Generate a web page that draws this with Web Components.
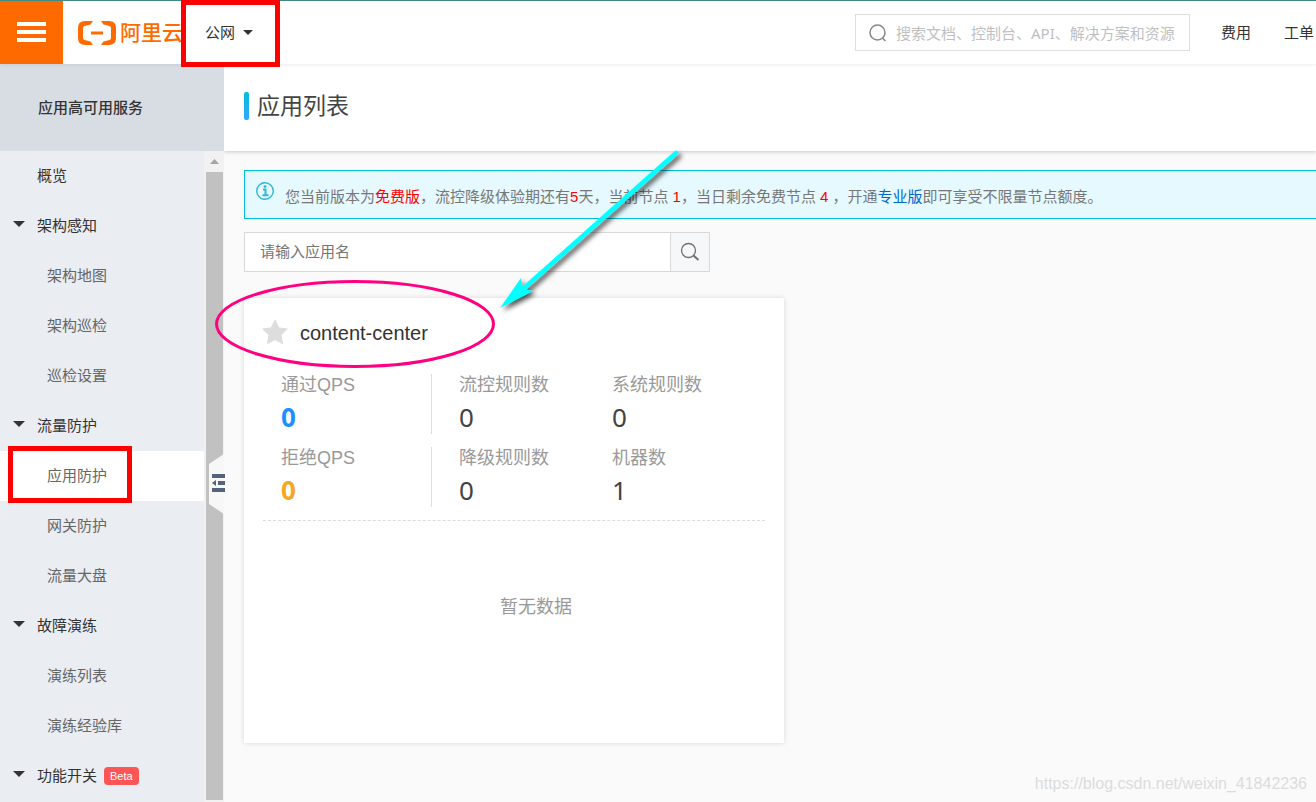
<!DOCTYPE html>
<html lang="zh-CN">
<head>
<meta charset="utf-8">
<meta name="viewport" content="width=device-width, initial-scale=1">
<title>应用列表</title>
<style>
  body { margin: 0; background: #fafafa; color: #333; font: 15px/20px "Liberation Sans", "Noto Sans CJK SC", sans-serif; }
</style>
</head>
<body>
<console-app></console-app>
<script>
const define = (name, html, setup) => {
  const template = document.createElement('template');
  template.innerHTML = html;
  customElements.define(name, class extends HTMLElement {
    connectedCallback() {
      if (this.shadowRoot) return;
      const root = this.attachShadow({ mode: 'open' });
      root.append(template.content.cloneNode(true));
      if (setup) setup(this, root);
    }
  });
};

define('brand-logo', `
  <style>
    :host { display: flex; align-items: center; gap: 4px; color: #ff6a00; font-size: 21px; font-weight: 500; line-height: 30px; white-space: nowrap; }
    svg { flex: none; }
  </style>
  <svg width="38" height="24" viewBox="0 0 38 24" fill="#ff6a00" aria-hidden="true">
    <path d="M15 0H7Q0 0 0 7v10q0 7 7 7h8l-2.500-3.500-6-1.500q-1.500-.5-1.500-2V7q0-1.500 1.500-2l6-1.500z"/>
    <path d="M23 0h8q7 0 7 7v10q0 7-7 7h-8l2.500-3.500 6-1.500q1.500-.5 1.500-2V7q0-1.500-1.500-2l-6-1.500z"/>
    <path d="M13 10.500h12v3H13z"/>
  </svg>
  <span>阿里云</span>
`);

define('top-bar', `
  <style>
    :host { display: flex; box-sizing: border-box; height: 64px; border-top: 1px solid #3f8a82; background: #fff; box-shadow: 0 1px 4px rgba(0,0,0,.08); position: relative; z-index: 2; align-items: center; padding-right: 2px; }
    button { font: inherit; color: inherit; border: 0; background: none; padding: 0; }
    .menu { width: 63px; height: 63px; background: #ff6a00; display: grid; place-items: center; flex: none; }
    .menu svg { margin-bottom: 2px; }
    brand-logo { margin-left: 15px; flex: none; }
    .region { display: flex; align-items: center; gap: 8px; margin-left: 22px; flex: none; }
    form { margin: 0 0 0 auto; display: flex; align-items: center; gap: 9px; box-sizing: border-box; width: 335px; height: 37px; padding: 0 13px; border: 1px solid #dedede; }
    form svg { flex: none; }
    input { flex: 1; min-width: 0; border: 0; padding: 0; outline: 0; background: none; font: 15px/20px "Noto Sans", "Noto Sans CJK SC", sans-serif; }
    input::placeholder { color: #bfbfbf; opacity: 1; }
    nav { display: flex; gap: 33px; margin-left: 31px; }
    a { color: #333; text-decoration: none; white-space: nowrap; }
  </style>
  <button class="menu" aria-label="菜单">
    <svg width="29" height="20" viewBox="0 0 29 20" fill="#fff"><path d="M0 0h29v4H0zM0 8h29v4H0zM0 16h29v4H0z"/></svg>
  </button>
  <brand-logo></brand-logo>
  <button class="region">公网<svg width="10" height="5" viewBox="0 0 10 5"><path d="M0 0h10L5 5z" fill="#333"/></svg></button>
  <form role="search">
    <svg width="18" height="18" viewBox="0 0 18 18" fill="none" stroke="#888" stroke-width="1.500"><circle cx="8.500" cy="8.500" r="7.500"/><path d="M13.500 14l3 3"/></svg>
    <input type="text" aria-label="搜索" placeholder="搜索文档、控制台、API、解决方案和资源">
  </form>
  <nav><a href="#">费用</a><a href="#">工单</a></nav>
`);

define('nav-item', `
  <style>
    :host { display: block; }
    a { display: flex; align-items: center; box-sizing: border-box; height: 50px; padding-left: 37px; color: #333; text-decoration: none; white-space: nowrap; }
    svg { display: none; flex: none; margin-bottom: 4px; }
    :host([group]) a { padding-left: 13px; gap: 12px; }
    :host([group]) svg { display: block; }
    :host([child]) a { padding-left: 47px; color: #666; }
    :host([active]) a { background: #fff; }
    .badge { display: none; margin-left: -5px; padding: 0 6px; border-radius: 4px; background: #fe5555; color: #fff; font-size: 11px; line-height: 18px; }
    :host([badge]) .badge { display: block; }
  </style>
  <a href="#"><svg width="12" height="6" viewBox="0 0 12 6"><path d="M0 0h12L6 6z" fill="#333"/></svg><span><slot></slot></span></a>
`, (host, root) => {
  const label = host.getAttribute('badge');
  if (label) {
    const badge = document.createElement('span');
    badge.className = 'badge';
    badge.textContent = label;
    root.querySelector('a').append(badge);
  }
});

define('side-bar', `
  <style>
    :host { display: flex; flex-direction: column; width: 224px; flex: none; background: #eaedf2; position: relative; z-index: 1; }
    h2 { margin: 0; height: 87px; display: flex; align-items: center; padding-left: 38px; background: #d8dde4; font-size: 15px; line-height: 20px; font-weight: 500; }
    .body { display: flex; flex: 1; }
    nav { flex: 1; }
    .track { width: 17px; padding: 0 1px 2px 2px; background: #f1f1f1; display: flex; flex-direction: column; }
    .up { height: 21px; display: grid; place-items: center; }
    .thumb { flex: 1; background: #c1c1c1; }
    .fold { position: absolute; right: -1px; top: 390px; border: 0; padding: 0; background: none; width: 16px; height: 60px; }
    .fold svg { display: block; }
  </style>
  <h2>应用高可用服务</h2>
  <div class="body">
    <nav>
      <nav-item>概览</nav-item>
      <nav-item group>架构感知</nav-item>
      <nav-item child>架构地图</nav-item>
      <nav-item child>架构巡检</nav-item>
      <nav-item child>巡检设置</nav-item>
      <nav-item group>流量防护</nav-item>
      <nav-item child active>应用防护</nav-item>
      <nav-item child>网关防护</nav-item>
      <nav-item child>流量大盘</nav-item>
      <nav-item group>故障演练</nav-item>
      <nav-item child>演练列表</nav-item>
      <nav-item child>演练经验库</nav-item>
      <nav-item group badge="Beta">功能开关</nav-item>
    </nav>
    <div class="track">
      <div class="up"><svg width="9" height="5" viewBox="0 0 9 5"><path d="M0 5h9L4.500 0z" fill="#a3a3a3"/></svg></div>
      <div class="thumb"></div>
    </div>
  </div>
  <button class="fold" aria-label="收起菜单">
    <svg width="16" height="60" viewBox="0 0 16 60"><path d="M0 10L15 0v60L0 50z" fill="#f7f7f7"/><path d="M3 20h13v4H3zM9 27h7v4H9zM3 34h13v4H3zM3 29l4-3v6z" fill="#546478"/></svg>
  </button>
`);

define('page-title', `
  <style>
    :host { display: flex; align-items: center; box-sizing: border-box; gap: 8px; height: 87px; padding: 0 20px 3px; background: #fff; box-shadow: 0 1px 4px rgba(0,0,0,.2); }
    i { width: 5px; height: 28px; border-radius: 2px; background: linear-gradient(#00c1de, #35a4ff); }
    h1 { margin: 0; font-size: 23px; line-height: 30px; font-weight: 400; color: #444; }
  </style>
  <i></i><h1><slot></slot></h1>
`);

define('notice-bar', `
  <style>
    :host { display: flex; gap: 11px; box-sizing: border-box; height: 49px; padding: 11px 0 0 11px; border: 1px solid #00c1de; border-right: 0; background: #e5f9ff; color: #777; white-space: nowrap; overflow: hidden; }
    svg { flex: none; }
    p { margin: 0; padding-top: 5px; line-height: 20px; }
    ::slotted(b) { font-weight: 400; color: #f00; }
    ::slotted(a) { color: #06c; text-decoration: none; }
  </style>
  <svg width="18" height="18" viewBox="0 0 18 18" fill="none" stroke="#2cb8d8"><circle cx="9" cy="9" r="8.300" stroke-width="1.400"/><path d="M7 7.500h2.500V13M6.500 13.200h6" stroke-width="2"/><circle cx="9" cy="4.600" r="1.400" fill="#2cb8d8" stroke="none"/></svg>
  <p><slot></slot></p>
`);

define('app-search', `
  <style>
    :host { display: block; }
    form { margin: 0; display: flex; box-sizing: border-box; max-width: 466px; height: 40px; border: 1px solid #d7d8d9; background: #fff; }
    input { flex: 1; min-width: 0; border: 0; outline: 0; padding: 0 15px; background: none; font: inherit; }
    input::placeholder { color: #757575; opacity: 1; }
    button { width: 39px; border: 0; border-left: 1px solid #d7d8d9; background: #f6f7f9; padding: 0; display: grid; place-items: center; }
  </style>
  <form role="search">
    <input type="text" aria-label="应用名" placeholder="请输入应用名">
    <button type="button" aria-label="搜索"><svg width="20" height="20" viewBox="0 0 20 20" fill="none" stroke="#707070"><circle cx="8.500" cy="8.500" r="7" stroke-width="1.300"/><path d="M13.500 13.500l5 4.500" stroke-width="2"/></svg></button>
  </form>
`);

define('stat-cell', `
  <style>
    :host { display: block; box-sizing: border-box; height: 60px; color: #444; }
    .label { font-size: 18px; line-height: 22px; color: #999; white-space: nowrap; }
    .value { font: 26px/36px "Noto Sans", sans-serif; margin-top: 3px; }
    :host([tone]) { border-right: 1px solid #dedede; }
    :host([tone]) .value { font-weight: 700; }
    :host([tone="pass"]) .value { color: #1e8fff; }
    :host([tone="block"]) .value { color: #f5a623; }
  </style>
  <div class="label"></div><div class="value"><slot></slot></div>
`, (host, root) => { root.querySelector('.label').textContent = host.getAttribute('label'); });

define('app-card', `
  <style>
    :host { display: block; box-sizing: border-box; max-width: 540px; padding: 19px; background: #fff; box-shadow: 0 0 5px rgba(0,0,0,.14); }
    header { display: flex; align-items: center; gap: 12px; height: 30px; }
    header button { border: 0; background: none; padding: 0; margin-left: -1px; display: flex; }
    h3 { margin: 0; font-size: 20px; line-height: 32px; font-weight: 400; padding-top: 2px; }
    .stats { display: grid; grid-template-columns: 151px 126px 1fr; gap: 13px 27px; padding: 27px 0 13px 18px; border-bottom: 1px dashed #dcdcdc; }
    .empty { margin: 0; padding: 72px 0 103px 44px; text-align: center; font-size: 18px; line-height: 28px; color: #999; }
  </style>
  <header>
    <button aria-label="收藏"><svg width="26" height="26" viewBox="0 0 26 26"><path d="M13 1l3.700 7.900 8.600 1.100-6.300 6 1.600 8.700L13 20.500l-7.600 4.200L7 16 .700 10l8.600-1.100z" fill="#ddd" stroke="#ddd" stroke-linejoin="round"/></svg></button>
    <h3><slot name="name"></slot></h3>
  </header>
  <div class="stats"><slot></slot></div>
  <p class="empty"><slot name="empty"></slot></p>
`);

/* Hand-drawn marks laid freely over the page. */
define('markup-layer', `
  <style>
    :host { position: absolute; inset: 0; z-index: 5; pointer-events: none; overflow: hidden; }
    svg { display: block; width: 100%; height: 100%; }
  </style>
  <svg aria-hidden="true" fill="none">
    <defs><filter id="shade" x="-20%" y="-20%" width="140%" height="140%"><feDropShadow dx="3" dy="3" stdDeviation="2.500" flood-color="#000" flood-opacity=".7"/></filter></defs>
    <g stroke="#f00" stroke-width="5"><path d="M183.500 2.500h94v62h-94z"/><path d="M10.500 448.500h119v52h-119z"/></g>
    <ellipse cx="355" cy="324" rx="138.500" ry="42.500" stroke="#ff0080" stroke-width="3"/>
    <g filter="url(#shade)"><path d="M676 153L522 290" stroke="#0ff" stroke-width="4.500" stroke-linecap="round"/><path d="M500 308l21-30 2 11 10 2z" fill="#0ff"/></g>
  </svg>
`);

define('console-app', `
  <style>
    :host { display: flex; flex-direction: column; min-height: 100vh; position: relative; }
    .columns { display: flex; flex: 1; }
    main { flex: 1; min-width: 0; }
    .content { display: flex; flex-direction: column; padding: 19px 0 19px 20px; }
    app-search { margin: 13px 0 26px; }
    .watermark { position: absolute; right: 9px; bottom: 8px; font-size: 16px; color: #dcdcdc; }
  </style>
  <top-bar></top-bar>
  <div class="columns">
    <side-bar></side-bar>
    <main>
      <page-title>应用列表</page-title>
      <div class="content">
        <notice-bar>您当前版本为<b>免费版</b>，流控降级体验期还有<b>5</b>天，当前节点 <b>1</b>，当日剩余免费节点 <b>4</b> ，开通<a href="#">专业版</a>即可享受不限量节点额度。</notice-bar>
        <app-search></app-search>
        <app-card>
          <span slot="name">content-center</span>
          <stat-cell label="通过QPS" tone="pass">0</stat-cell>
          <stat-cell label="流控规则数">0</stat-cell>
          <stat-cell label="系统规则数">0</stat-cell>
          <stat-cell label="拒绝QPS" tone="block">0</stat-cell>
          <stat-cell label="降级规则数">0</stat-cell>
          <stat-cell label="机器数">1</stat-cell>
          <span slot="empty">暂无数据</span>
        </app-card>
      </div>
    </main>
  </div>
  <span class="watermark">https://blog.csdn.net/weixin_41842236</span>
  <markup-layer></markup-layer>
`);
</script>
</body>
</html>
